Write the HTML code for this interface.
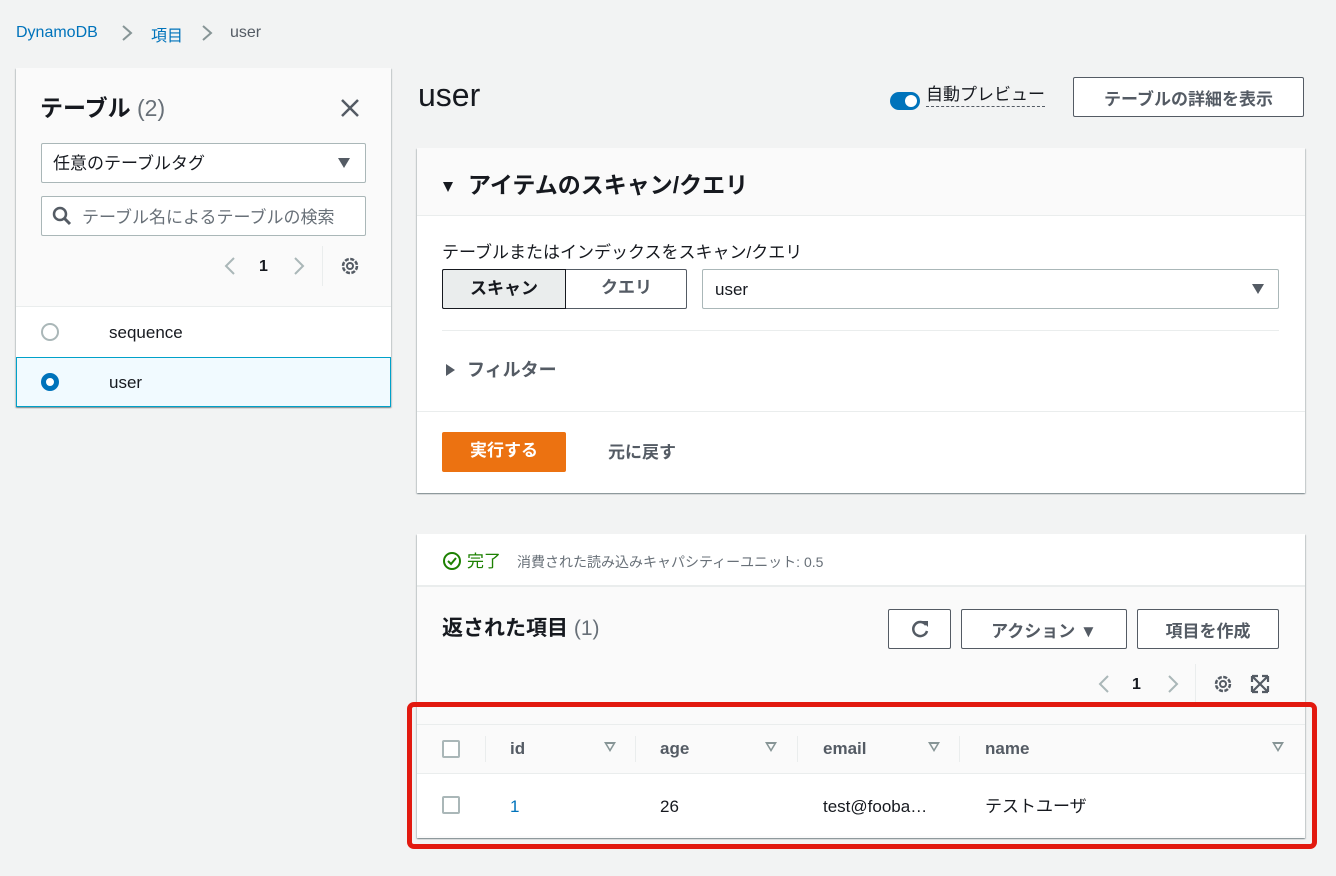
<!DOCTYPE html>
<html><head><meta charset="utf-8"><style>
*{box-sizing:border-box;margin:0;padding:0}
body{width:1336px;height:876px;background:#f2f3f3;font-family:"Liberation Sans","Noto Sans CJK JP",sans-serif;color:#16191f;position:relative;overflow:hidden;font-size:16px}
.a{position:absolute}
.btn{position:absolute;border:1px solid #545b64;background:#fff;border-radius:2px;font-weight:bold;color:#545b64;display:flex;align-items:center;justify-content:center;font-size:17px}
.panel{position:absolute;background:#fff;box-shadow:0 1px 1px 0 rgba(0,28,36,.3),1px 1px 1px 0 rgba(0,28,36,.15),-1px 1px 1px 0 rgba(0,28,36,.15)}
.tri{position:absolute;width:0;height:0;border-left:6px solid transparent;border-right:6px solid transparent;border-top:10px solid #545b64}
.th{position:absolute;top:739px;font-weight:bold;color:#545b64;font-size:17px}
.sep{position:absolute;top:736px;width:1px;height:26px;background:#eaeded}
.st{position:absolute;top:742px;width:0;height:0;border-left:6px solid transparent;border-right:6px solid transparent;border-top:10px solid #879596}
.st::after{content:"";position:absolute;left:-3px;top:-8px;border-left:3px solid transparent;border-right:3px solid transparent;border-top:5px solid #fafafa}
.cb{position:absolute;width:18px;height:18px;border:2px solid #aab7b8;border-radius:2px;background:#fff}
</style></head><body>
<div class="a" style="left:16px;top:24px;font-size:16px;color:#0073bb">DynamoDB</div>
<svg class="a" style="left:120px;top:24px" width="14" height="18"><path d="M3 2l8 7-8 7" stroke="#879596" stroke-width="2" fill="none"/></svg>
<div class="a" style="left:151px;top:22px;color:#0073bb">項目</div>
<svg class="a" style="left:200px;top:24px" width="14" height="18"><path d="M3 2l8 7-8 7" stroke="#879596" stroke-width="2" fill="none"/></svg>
<div class="a" style="left:230px;top:24px;color:#545b64">user</div>

<div class="panel" style="left:16px;top:68px;width:375px;height:339px;background:#fafafa"></div>
<div class="a" style="left:40px;top:89px;font-size:23px;font-weight:bold">テーブル <span style="font-weight:normal;color:#687078">(2)</span></div>
<svg class="a" style="left:340px;top:98px" width="20" height="20"><path d="M2 2l16 16M18 2L2 18" stroke="#545b64" stroke-width="2.5"/></svg>
<div class="a" style="left:41px;top:143px;width:325px;height:40px;border:1px solid #aab7b8;background:#fff;border-radius:2px;padding:5px 11px;font-size:17px">任意のテーブルタグ</div>
<div class="tri" style="left:338px;top:158px;border-top-color:#545b64"></div>
<div class="a" style="left:41px;top:196px;width:325px;height:40px;border:1px solid #aab7b8;background:#fff;border-radius:2px;padding:6px 0 0 40px;font-size:17px;color:#687078">テーブル名によるテーブルの検索</div>
<svg class="a" style="left:52px;top:206px" width="20" height="20"><circle cx="8" cy="8" r="6" stroke="#545b64" stroke-width="2.5" fill="none"/><path d="M12 12l6 6" stroke="#545b64" stroke-width="3"/></svg>
<svg class="a" style="left:223px;top:256px" width="14" height="20"><path d="M11 2L3 10l8 8" stroke="#aab7b8" stroke-width="2" fill="none"/></svg>
<div class="a" style="left:259px;top:258px;font-weight:bold">1</div>
<svg class="a" style="left:292px;top:256px" width="14" height="20"><path d="M3 2l8 8-8 8" stroke="#aab7b8" stroke-width="2" fill="none"/></svg>
<div class="a" style="left:322px;top:246px;width:1px;height:40px;background:#eaeded"></div>
<svg class="a" style="left:339px;top:255px" width="22" height="22" viewBox="0 0 22 22"><circle cx="11" cy="11" r="7" stroke="#545b64" stroke-width="2.5" fill="none" stroke-dasharray="4 1.5"/><circle cx="11" cy="11" r="3" stroke="#545b64" stroke-width="2" fill="none"/></svg>
<div class="a" style="left:16px;top:306px;width:375px;height:51px;background:#fff;border-top:1px solid #eaeded"></div>
<div class="a" style="left:41px;top:323px;width:18px;height:18px;border:2px solid #aab7b8;border-radius:50%"></div>
<div class="a" style="left:109px;top:323px;font-size:17px">sequence</div>
<div class="a" style="left:16px;top:357px;width:375px;height:50px;background:#f1faff;border:1px solid #00a1c9"></div>
<div class="a" style="left:41px;top:373px;width:18px;height:18px;border:5px solid #0073bb;border-radius:50%;background:#fff"></div>
<div class="a" style="left:109px;top:373px;font-size:17px">user</div>

<div class="a" style="left:418px;top:77px;font-size:32px">user</div>
<div class="a" style="left:890px;top:92px;width:30px;height:18px;border-radius:9px;background:#0073bb"></div>
<div class="a" style="left:905px;top:95px;width:12px;height:12px;border-radius:50%;background:#fff"></div>
<div class="a" style="left:926px;top:84px;font-size:17px;border-bottom:1px dashed #545b64;line-height:22px">自動プレビュー</div>
<div class="btn" style="left:1073px;top:77px;width:231px;height:40px">テーブルの詳細を表示</div>

<div class="panel" style="left:417px;top:148px;width:888px;height:345px"></div>
<div class="a" style="left:417px;top:148px;width:888px;height:68px;background:#fafafa;border-bottom:1px solid #eaeded"></div>
<div class="tri" style="left:443px;top:182px;border-left-width:5px;border-right-width:5px;border-top-color:#16191f"></div>
<div class="a" style="left:468px;top:166px;font-size:23px;font-weight:bold">アイテムのスキャン/クエリ</div>
<div class="a" style="left:442px;top:238px;font-size:17px">テーブルまたはインデックスをスキャン/クエリ</div>
<div class="a" style="left:442px;top:269px;width:245px;height:40px;border:1px solid #545b64;border-radius:2px;background:#fff"></div>
<div class="a" style="left:442px;top:269px;width:124px;height:40px;border:1px solid #16191f;border-radius:2px 0 0 2px;background:#eaeded;font-weight:bold;font-size:17px;text-align:center;line-height:38px">スキャン</div>
<div class="a" style="left:566px;top:269px;width:121px;height:40px;font-weight:bold;font-size:17px;text-align:center;line-height:38px;color:#545b64">クエリ</div>
<div class="a" style="left:702px;top:269px;width:577px;height:40px;border:1px solid #aab7b8;border-radius:2px;background:#fff;padding:10px 12px;font-size:17px">user</div>
<div class="tri" style="left:1252px;top:284px"></div>
<div class="a" style="left:442px;top:330px;width:837px;height:1px;background:#eaeded"></div>
<div class="a" style="left:446px;top:364px;border-top:6px solid transparent;border-bottom:6px solid transparent;border-left:9px solid #545b64"></div>
<div class="a" style="left:467px;top:356px;font-size:18px;font-weight:bold;color:#545b64">フィルター</div>
<div class="a" style="left:417px;top:411px;width:888px;height:1px;background:#eaeded"></div>
<div class="a" style="left:442px;top:432px;width:124px;height:40px;background:#ec7211;border-radius:2px;color:#fff;font-weight:bold;font-size:17px;text-align:center;line-height:38px">実行する</div>
<div class="a" style="left:608px;top:438px;font-weight:bold;font-size:17px;color:#545b64">元に戻す</div>

<div class="panel" style="left:417px;top:534px;width:888px;height:304px;background:#fafafa"></div>
<div class="a" style="left:417px;top:534px;width:888px;height:53px;background:#fff;border-bottom:2px solid #eaeded"></div>
<svg class="a" style="left:442px;top:551px" width="20" height="20"><circle cx="10" cy="10" r="8" stroke="#1d8102" stroke-width="2" fill="none"/><path d="M6 10l3 3 5-6" stroke="#1d8102" stroke-width="2" fill="none"/></svg>
<div class="a" style="left:467px;top:547px;color:#1d8102;font-size:17px">完了</div>
<div class="a" style="left:517px;top:552px;color:#687078;font-size:14px">消費された読み込みキャパシティーユニット: 0.5</div>
<div class="a" style="left:442px;top:612px;font-size:21px;font-weight:bold">返された項目 <span style="font-weight:normal;color:#687078">(1)</span></div>
<div class="btn" style="left:888px;top:609px;width:63px;height:40px"><svg width="22" height="22"><path d="M17 7A7 7 0 1 0 18 13" stroke="#545b64" stroke-width="2.5" fill="none"/><path d="M13 3h6v6z" fill="#545b64"/></svg></div>
<div class="btn" style="left:961px;top:609px;width:166px;height:40px">アクション&nbsp;▼</div>
<div class="btn" style="left:1137px;top:609px;width:142px;height:40px">項目を作成</div>
<svg class="a" style="left:1097px;top:674px" width="14" height="20"><path d="M11 2L3 10l8 8" stroke="#aab7b8" stroke-width="2" fill="none"/></svg>
<div class="a" style="left:1132px;top:676px;font-weight:bold">1</div>
<svg class="a" style="left:1166px;top:674px" width="14" height="20"><path d="M3 2l8 8-8 8" stroke="#aab7b8" stroke-width="2" fill="none"/></svg>
<div class="a" style="left:1195px;top:664px;width:1px;height:40px;background:#eaeded"></div>
<svg class="a" style="left:1212px;top:673px" width="22" height="22"><circle cx="11" cy="11" r="7" stroke="#545b64" stroke-width="2.5" fill="none" stroke-dasharray="4 1.5"/><circle cx="11" cy="11" r="3" stroke="#545b64" stroke-width="2" fill="none"/></svg>
<svg class="a" style="left:1250px;top:674px" width="20" height="20"><path d="M2 2h6M2 2v6M18 2h-6M18 2v6M2 18h6M2 18v-6M18 18h-6M18 18v-6M3 3l14 14M17 3L3 17" stroke="#545b64" stroke-width="2.2" fill="none"/></svg>
<div class="a" style="left:417px;top:724px;width:888px;height:50px;background:#fafafa;border-top:1px solid #eaeded;border-bottom:1px solid #eaeded"></div>
<div class="cb" style="left:442px;top:740px"></div>
<div class="sep" style="left:485px"></div>
<div class="th" style="left:510px">id</div><div class="st" style="left:604px"></div>
<div class="sep" style="left:635px"></div>
<div class="th" style="left:660px">age</div><div class="st" style="left:765px"></div>
<div class="sep" style="left:797px"></div>
<div class="th" style="left:823px">email</div><div class="st" style="left:928px"></div>
<div class="sep" style="left:959px"></div>
<div class="th" style="left:985px">name</div><div class="st" style="left:1272px"></div>
<div class="a" style="left:417px;top:774px;width:888px;height:62px;background:#fff"></div>
<div class="cb" style="left:442px;top:796px"></div>
<div class="a" style="left:510px;top:797px;color:#0073bb;font-size:17px">1</div>
<div class="a" style="left:660px;top:797px;font-size:17px">26</div>
<div class="a" style="left:823px;top:797px;font-size:17px">test@fooba…</div>
<div class="a" style="left:985px;top:792px;font-size:17px">テストユーザ</div>
<div class="a" style="left:407px;top:702px;width:910px;height:147px;border:5px solid #e2190f;border-radius:7px"></div>
</body></html>
